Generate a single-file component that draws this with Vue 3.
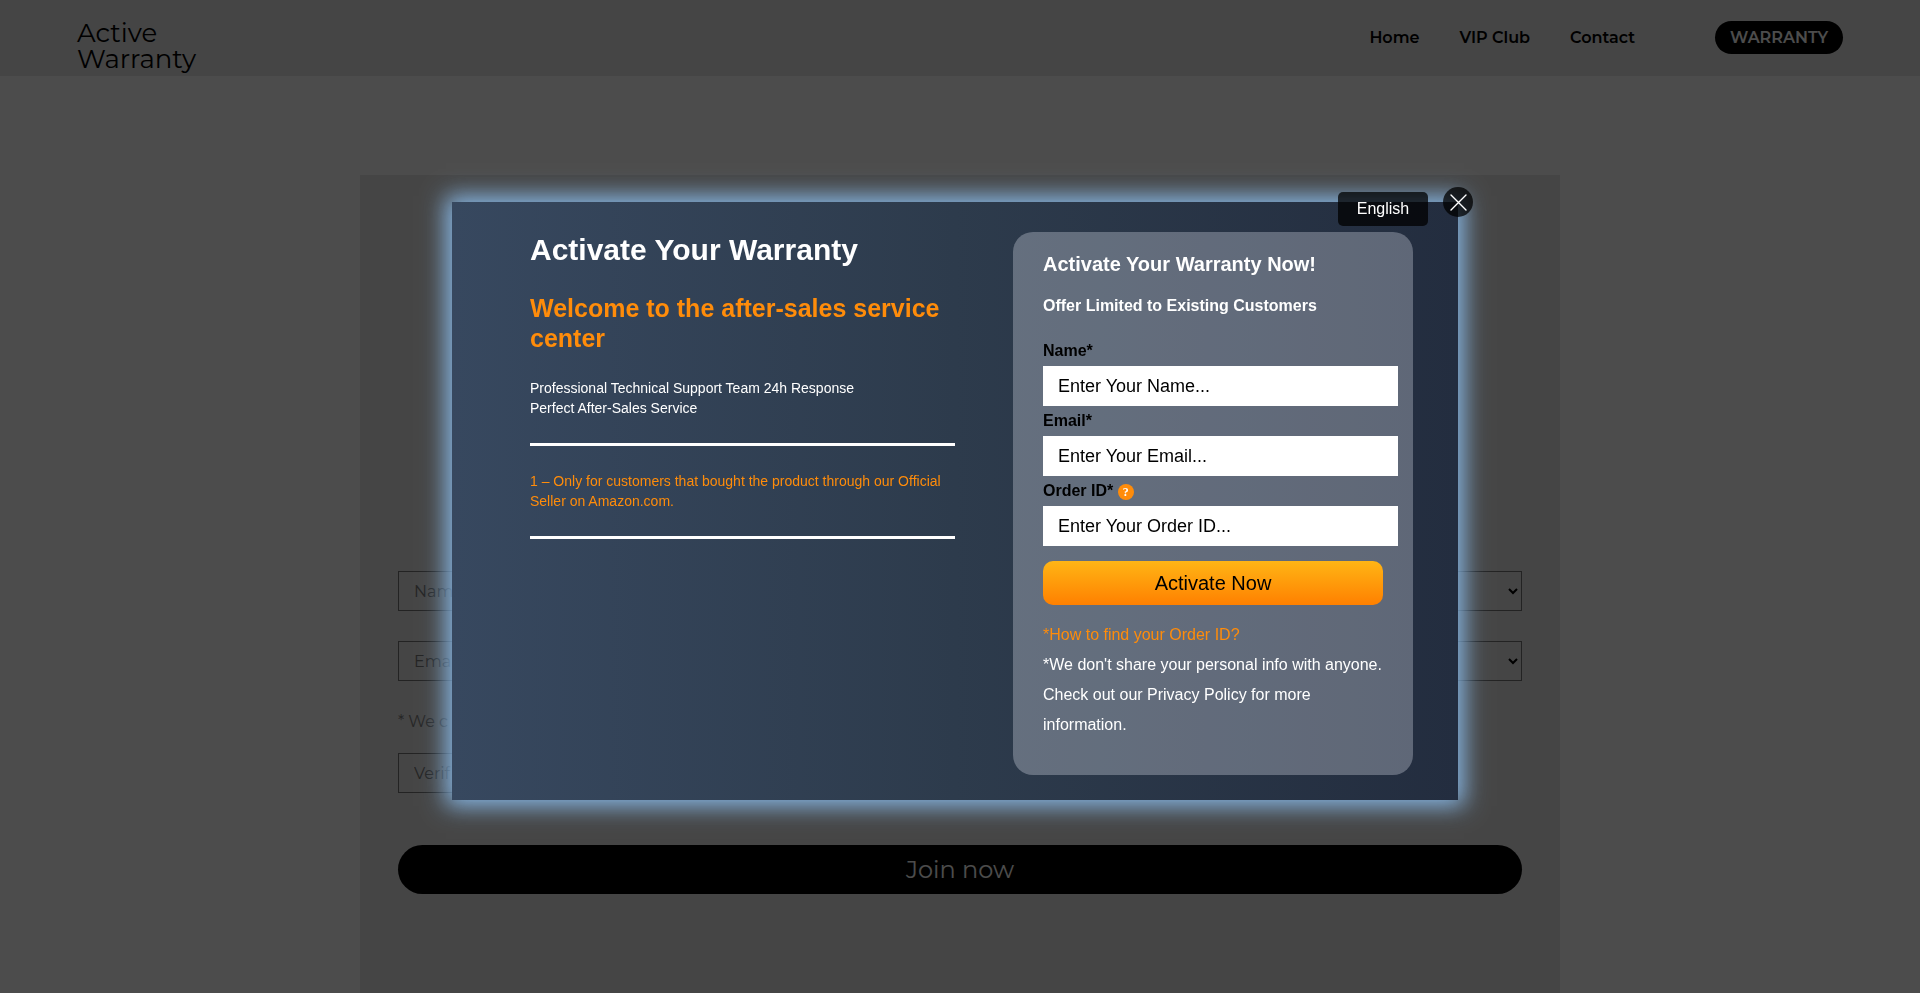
<script setup>
import { ref } from 'vue'

const showModal = ref(true)
const member = ref({ name: '', email: '', code: '', country: '', product: '' })
const warranty = ref({ name: '', email: '', orderId: '' })

const navLinks = ['Home', 'VIP Club', 'Contact']

const closeModal = () => {
  showModal.value = false
}
</script>

<template>
  <div class="page">
    <header class="header">
      <a href="#" class="logo">Active<br />Warranty</a>
      <nav class="nav">
        <a v-for="link in navLinks" :key="link" href="#">{{ link }}</a>
        <a href="#" class="pill">WARRANTY</a>
      </nav>
    </header>

    <main class="panel">
      <form class="join" @submit.prevent>
        <div class="row">
          <input v-model="member.name" type="text" placeholder="Name" aria-label="Name" />
          <select v-model="member.country" aria-label="Country">
            <option value=""></option>
          </select>
        </div>
        <div class="row">
          <input v-model="member.email" type="email" placeholder="Email" aria-label="Email" />
          <select v-model="member.product" aria-label="Product">
            <option value=""></option>
          </select>
        </div>
        <p class="hint">* We c</p>
        <div class="row">
          <input v-model="member.code" type="text" placeholder="Verif" aria-label="Verification" />
        </div>
        <button type="submit" class="join-button">Join now</button>
      </form>
    </main>

    <div v-if="showModal" class="overlay">
      <div class="modal" role="dialog" aria-modal="true">
        <button type="button" class="language">English</button>
        <button type="button" class="close" aria-label="Close" @click="closeModal">
          <svg width="30" height="30" viewBox="0 0 30 30">
            <path d="M8 8L23 23M23 8L8 23" stroke="#fff" stroke-width="1.4" stroke-linecap="round" />
          </svg>
        </button>

        <section class="intro">
          <h1>Activate Your Warranty</h1>
          <h2>Welcome to the after-sales service center</h2>
          <p>Professional Technical Support Team 24h Response<br />Perfect After-Sales Service</p>
          <hr />
          <p class="orange">1 – Only for customers that bought the product through our Official Seller on Amazon.com.</p>
          <hr />
        </section>

        <form class="card" @submit.prevent>
          <h3>Activate Your Warranty Now!</h3>
          <h4>Offer Limited to Existing Customers</h4>

          <label for="w-name">Name*</label>
          <input id="w-name" v-model="warranty.name" type="text" placeholder="Enter Your Name..." />
          <label for="w-email">Email*</label>
          <input id="w-email" v-model="warranty.email" type="email" placeholder="Enter Your Email..." />
          <label for="w-order">Order ID* <span class="help">?</span></label>
          <input id="w-order" v-model="warranty.orderId" type="text" placeholder="Enter Your Order ID..." />

          <button type="submit" class="activate">Activate Now</button>

          <a href="#" class="order-link">*How to find your Order ID?</a>
          <p>*We don't share your personal info with anyone. Check out our Privacy Policy for more information.</p>
        </form>
      </div>
    </div>
  </div>
</template>

<style>
body {
  background: #fff;
}
</style>

<style scoped>
* {
  box-sizing: border-box;
}

.page {
  height: 100vh;
  overflow: hidden;
  display: flex;
  flex-direction: column;
  font-family: Montserrat, Inter, sans-serif;
  font-size: 16px;
  color: #000;
}

a {
  color: inherit;
  text-decoration: none;
}

.header {
  display: flex;
  justify-content: space-between;
  height: 76px;
  padding: 20px 77px 0;
  background: #e6e6e6;
  flex-shrink: 0;
}

.logo {
  font-size: 26px;
  line-height: 26px;
  font-weight: 400;
}

.nav {
  display: flex;
  align-items: center;
  gap: 40px;
  height: 35px;
  font-weight: 600;
}

.pill {
  margin-left: 40px;
  padding: 0 15px;
  line-height: 33px;
  border-radius: 17px;
  background: #000;
  color: #fff;
}

.panel {
  flex: 1;
  width: 100%;
  max-width: 1200px;
  margin: 99px auto 0;
  padding: 396px 38px 0;
  background: #e6e6e6;
}

.row {
  display: grid;
  grid-template-columns: 1fr 1fr;
  gap: 30px;
  margin-bottom: 30px;
}

.row input,
.row select {
  width: 100%;
  height: 40px;
  padding: 0 15px;
  border: 1px solid #767676;
  border-radius: 0;
  background: transparent;
  color: #000;
  font-family: inherit;
  font-size: 16px;
}

.row select {
  padding: 0;
}

.row input::placeholder {
  color: #757575;
}

.hint {
  margin: 0 0 21px;
  padding-top: 1px;
  line-height: 20px;
  color: #808080;
}

.join-button {
  width: 100%;
  height: 49px;
  margin-top: 22px;
  border: none;
  border-radius: 25px;
  background: #000;
  color: #fff;
  font-family: inherit;
  font-size: 24px;
  font-weight: 400;
}

.overlay {
  position: fixed;
  inset: 0;
  display: flex;
  align-items: center;
  justify-content: center;
  padding: 9px 10px 0 0;
  background: rgba(0, 0, 0, 0.7);
  font-family: "Liberation Sans", Arial, sans-serif;
}

.modal {
  position: relative;
  display: flex;
  align-items: flex-start;
  justify-content: space-between;
  width: 1006px;
  padding: 30px 45px 25px 78px;
  background: linear-gradient(to right, #37485f, #2d3b4c 50%, #232d3f);
  box-shadow: 0 0 22px 6px #88b8e6;
  color: #fff;
}

.language {
  position: absolute;
  top: -10px;
  right: 30px;
  width: 90px;
  height: 34px;
  padding: 0;
  border: none;
  border-radius: 5px;
  background: rgba(0, 0, 0, 0.75);
  color: #fff;
  font-family: inherit;
  font-size: 16px;
}

.close {
  position: absolute;
  top: -15px;
  right: -15px;
  width: 30px;
  height: 30px;
  padding: 0;
  border: none;
  border-radius: 50%;
  background: rgba(0, 0, 0, 0.75);
}

.close svg {
  display: block;
}

.intro {
  width: 425px;
}

.intro h1 {
  margin: 0 0 25px;
  font-size: 30px;
  line-height: 36px;
}

.intro h2 {
  margin: 0 0 25px;
  font-size: 25px;
  line-height: 30px;
  color: #ff8c0a;
}

.intro p {
  margin: 0;
  font-size: 14px;
  line-height: 20px;
}

.intro hr {
  height: 3px;
  margin: 25px 0;
  border: none;
  background: #fff;
}

.intro .orange {
  color: #ff8c0a;
}

.card {
  width: 400px;
  padding: 20px 30px 35px;
  border-radius: 20px;
  background: rgba(240, 246, 255, 0.29);
}

.card h3 {
  margin: 0 0 18px;
  font-size: 20px;
  line-height: 24px;
}

.card h4 {
  margin: 0 0 18px;
  font-size: 16px;
  line-height: 24px;
}

.card label {
  display: block;
  line-height: 30px;
  font-weight: bold;
  color: #000;
}

.card input {
  display: block;
  width: 355px;
  height: 40px;
  padding: 0 15px;
  border: none;
  background: #fff;
  font-family: inherit;
  font-size: 18px;
}

.card input::placeholder {
  color: #000;
}

.help {
  display: inline-block;
  width: 16px;
  height: 16px;
  border-radius: 50%;
  background: #ff8c0a;
  color: #fff;
  font-family: "Liberation Serif", serif;
  font-size: 12px;
  line-height: 16px;
  text-align: center;
}

.activate {
  width: 100%;
  height: 44px;
  margin: 15px 0;
  border: none;
  border-radius: 10px;
  background: linear-gradient(#ffb515, #ff8000);
  color: #000;
  font-family: inherit;
  font-size: 20px;
}

.order-link {
  display: block;
  line-height: 30px;
  color: #ff8c0a;
}

.card p {
  margin: 0;
  line-height: 30px;
}
</style>
